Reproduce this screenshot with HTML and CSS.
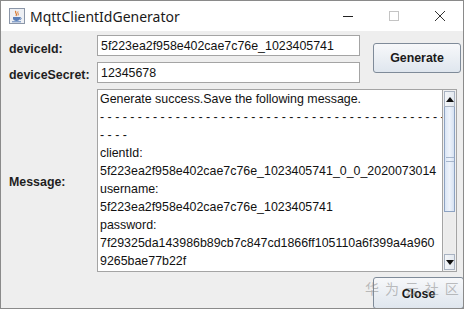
FILE: index.html
```html
<!DOCTYPE html>
<html>
<head>
<meta charset="utf-8">
<link rel="stylesheet" href="styles.css">
</head>
<body>
<div class="window">
  <div class="titlebar">
    <svg class="app-icon" width="16" height="16" viewBox="0 0 16 16">
      <rect x="0.5" y="0.5" width="15" height="15" fill="#eef0f4" stroke="#8b96a8"/>
      <path d="M7 3 C5 5 9 5 7 8" stroke="#d9772b" stroke-width="1.2" fill="none"/>
      <path d="M9 3.5 C8 5 10 5.5 9 7.5" stroke="#d9772b" stroke-width="1" fill="none"/>
      <path d="M4 9 h7 v1.5 c0 1.5 -1.5 2.5 -3.5 2.5 s-3.5 -1 -3.5 -2.5z" fill="#5a7fb8"/>
      <path d="M11 9.5 c1.5 0 1.5 2 0 2" stroke="#5a7fb8" fill="none"/>
      <rect x="3" y="13.3" width="9" height="1" fill="#5a7fb8"/>
    </svg>
    <span class="title">MqttClientIdGenerator</span>
    <div class="controls">
      <span class="ctl"><svg width="12" height="12" viewBox="0 0 12 12"><path d="M1 6.5h10" stroke="#222" stroke-width="1"/></svg></span>
      <span class="ctl"><svg width="12" height="12" viewBox="0 0 12 12"><rect x="1.5" y="1.5" width="9" height="9" fill="none" stroke="#c4c4c4"/></svg></span>
      <span class="ctl"><svg width="12" height="12" viewBox="0 0 12 12"><path d="M1 1L11 11M11 1L1 11" stroke="#333" stroke-width="1"/></svg></span>
    </div>
  </div>
  <div class="content">
    <div class="label row1">deviceId:</div>
    <div class="field row1">5f223ea2f958e402cae7c76e_1023405741</div>
    <div class="label row2">deviceSecret:</div>
    <div class="field row2">12345678</div>
    <div class="gen-cell"><button class="btn gen">Generate</button></div>
    <div class="label row3">Message:</div>
    <div class="message">
      <div class="text">
        <div>Generate success.Save the following message.</div>
        <div>- - - - - - - - - - - - - - - - - - - - - - - - - - - - - - - - - - - - - - - - - - - - - -</div>
        <div>- - - -</div>
        <div>clientId:</div>
        <div>5f223ea2f958e402cae7c76e_1023405741_0_0_2020073014</div>
        <div>username:</div>
        <div>5f223ea2f958e402cae7c76e_1023405741</div>
        <div>password:</div>
        <div>7f29325da143986b89cb7c847cd1866ff105110a6f399a4a960</div>
        <div>9265bae77b22f</div>
      </div>
      <div class="scrollbar">
        <div class="arrow up"><svg width="8" height="5" viewBox="0 0 8 5"><path d="M0 5L4 0L8 5z" fill="#111"/></svg></div>
        <div class="track">
          <div class="thumb"><span class="grip"></span></div>
        </div>
        <div class="arrow down"><svg width="8" height="5" viewBox="0 0 8 5"><path d="M0 0L4 5L8 0z" fill="#111"/></svg></div>
      </div>
    </div>
    <div class="footer">
      <button class="btn close">Close</button>
      <span class="watermark">华 为 云 社 区</span>
    </div>
  </div>
</div>
</body>
</html>
```
FILE: styles.css
```css
html, body {
  margin: 0;
  padding: 0;
  background: #ffffff;
}
.window {
  width: 464px;
  height: 309px;
  box-sizing: border-box;
  border: 1px solid #8a8a8a;
  display: flex;
  flex-direction: column;
  overflow: hidden;
  font-family: "Liberation Sans", Arial, sans-serif;
  color: #111;
}
.titlebar {
  height: 30px;
  background: #ffffff;
  display: flex;
  align-items: center;
  padding-left: 8px;
  flex: none;
}
.app-icon {
  margin-right: 5px;
}
.title {
  font-family: "Noto Sans", "Noto Sans CJK SC", sans-serif;
  font-size: 14px;
  color: #1a1a1a;
  flex: 1;
}
.controls {
  display: flex;
  align-self: stretch;
}
.ctl {
  width: 46px;
  display: flex;
  align-items: center;
  justify-content: center;
}
.content {
  flex: 1;
  background: #eeeeee;
  display: grid;
  grid-template-columns: 87px 264px 1fr;
  grid-template-rows: 27px 26px 188px 1fr;
  padding: 4px 0 0 8px;
  position: relative;
}
.label {
  font-weight: bold;
  font-size: 12.4px;
  display: flex;
  align-items: center;
  color: #1e1e1e;
}
.row1 { grid-row: 1; }
.row2 { grid-row: 2; }
.row3 { grid-row: 3; }
.field {
  grid-column: 2;
  align-self: start;
  height: 21px;
  box-sizing: border-box;
  border: 1px solid #a4a4a4;
  background: #fff;
  font-size: 12.4px;
  padding: 0 3px;
  display: flex;
  align-items: center;
  margin-left: 1px;
}
.gen-cell {
  grid-column: 3;
  grid-row: 1 / span 2;
  display: flex;
  align-items: flex-start;
  padding-left: 13px;
  padding-top: 8px;
}
.btn {
  font-family: "Liberation Sans", Arial, sans-serif;
  font-weight: bold;
  font-size: 12.4px;
  color: #1a1a1a;
  border: 1px solid #7f8b99;
  border-radius: 3px;
  background: linear-gradient(#f7f8fa, #dfe6ee);
  padding: 0;
}
.gen {
  width: 88px;
  height: 30px;
}
.message {
  grid-column: 2 / span 2;
  grid-row: 3;
  display: flex;
  margin-left: 1px;
  margin-right: 6px;
  margin-top: 1px;
  height: 183px;
}
.text {
  flex: none;
  width: 345px;
  background: #fff;
  border: 1px solid #a4a4a4;
  border-right: none;
  box-sizing: border-box;
  padding: 0 0 0 2px;
  font-size: 12.4px;
  line-height: 18px;
  overflow: hidden;
  white-space: nowrap;
}
.scrollbar {
  width: 17px;
  background: #f0f0f0;
  border: 1px solid #a4a4a4;
  box-sizing: border-box;
  display: flex;
  flex-direction: column;
  padding: 1px;
}
.arrow {
  height: 16px;
  box-sizing: border-box;
  border: 1px solid #a9b3c2;
  background: linear-gradient(90deg, #f4f6f9, #e4e9ef);
  display: flex;
  align-items: center;
  justify-content: center;
  flex: none;
}
.track {
  flex: 1;
  background: #ececec;
  display: flex;
  flex-direction: column;
}
.thumb {
  height: 105px;
  box-sizing: border-box;
  border: 1px solid #8ea3c2;
  border-top: none;
  background: linear-gradient(90deg, #dbe6f5, #eef3fb 50%, #d6e2f2);
  display: flex;
  align-items: center;
  justify-content: center;
}
.grip {
  width: 8px;
  height: 5px;
  border-top: 1px solid #a7b6cc;
  border-bottom: 1px solid #a7b6cc;
  box-sizing: border-box;
}
.footer {
  grid-column: 1 / span 3;
  grid-row: 4;
  display: flex;
  justify-content: flex-end;
  align-items: flex-start;
  position: relative;
  padding-top: 1px;
}
.close {
  width: 91px;
  height: 32px;
  margin-right: -1px;
  padding-top: 2px;
}
.watermark {
  position: absolute;
  left: 356px;
  top: 0px;
  font-family: "Noto Sans CJK SC", sans-serif;
  font-size: 14px;
  line-height: 24px;
  color: rgba(130, 130, 130, 0.5);
  letter-spacing: 1.4px;
  white-space: nowrap;
}
```
